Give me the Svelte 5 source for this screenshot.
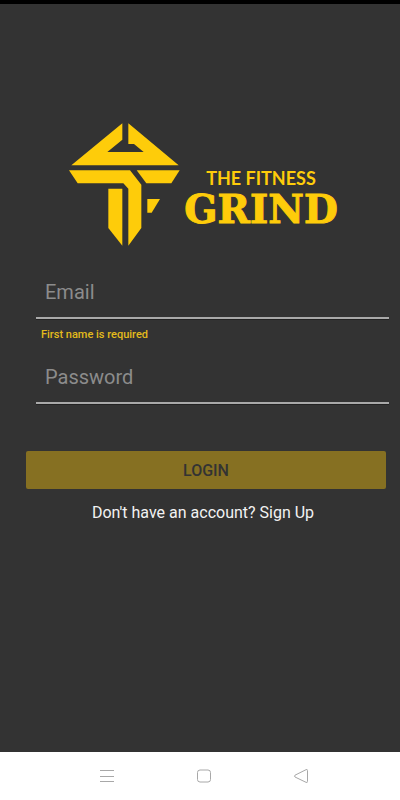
<script>
  let email = '';
  let password = '';
</script>

<div class="screen">
  <div class="status"></div>

  <main>
    <div class="brand">
      <svg class="mark" viewBox="27 24 333 369" aria-hidden="true">
        <!-- roof -->
        <path d="M187 25V74L142 111H251L222 87H205V25L356 151H34Z" />
        <!-- bars and stem -->
        <path d="M27 166H210L244 209V339L205 392V221L190 205H53Z" />
        <path d="M230 166H359L334 205H259Z" />
        <path d="M145 221H187V392L145 339Z" />
        <path d="M262 252H300L275 293H262Z" />
      </svg>
      <div class="name">
        <span class="small">THE FITNESS</span>
        <span class="big">GRIND</span>
      </div>
    </div>

    <form on:submit|preventDefault>
      <div class="field">
        <input type="email" placeholder="Email" aria-label="Email" aria-describedby="email-error" bind:value={email} />
      </div>
      <p class="error" id="email-error">First name is required</p>
      <div class="field">
        <input type="password" placeholder="Password" aria-label="Password" bind:value={password} />
      </div>
      <button class="login" type="submit">LOGIN</button>
    </form>

    <p class="signup">Don't have an account? <a href="#signup">Sign Up</a></p>
  </main>

  <nav>
    <button aria-label="Recent apps">
      <svg viewBox="0 0 16 16"><path d="M1 2.500H15M1 8.500H15M1 13.500H15" /></svg>
    </button>
    <button aria-label="Home">
      <svg viewBox="0 0 16 16"><rect x="1.500" y="2" width="13" height="12" rx="2.500" /></svg>
    </button>
    <button aria-label="Back">
      <svg viewBox="0 0 16 16"><path d="M13 1.700Q14.500 1 14.500 2.500V13.500Q14.500 15 13 14.300L2 9Q1 8 2 7.200Z" /></svg>
    </button>
  </nav>
</div>

<style>
  :global(body) {
    margin: 0;
    background: #333;
  }

  .screen {
    display: flex;
    flex-direction: column;
    min-height: 100vh;
    background: #333;
    color: #f2f2f2;
    font-family: Roboto, sans-serif;
  }

  .status {
    height: 4px;
    background: #000;
  }

  main {
    flex: 1;
    padding-top: 119px;
  }

  .brand {
    display: flex;
    justify-content: center;
    gap: 4px;
    padding-left: 7px;
    color: #fecc0a;
  }

  .mark {
    width: 111px;
    height: 123px;
    fill: #fecc0a;
  }

  .name {
    display: flex;
    flex-direction: column;
    align-items: center;
    padding-top: 45px;
  }

  .small {
    font: bold 18px/20px Lato, sans-serif;
  }

  .big {
    font: bold 39px/42px "DejaVu Serif", serif;
    -webkit-text-stroke: 1px #fecc0a;
  }

  form {
    display: flex;
    flex-direction: column;
    padding: 20px 14px 0 26px;
  }

  .field {
    display: flex;
    margin: 0 -3px 0 10px;
    border-bottom: 2px solid #a9a9a9;
    box-shadow: 0 1px #222;
  }

  input {
    flex: 1;
    min-width: 0;
    height: 51px;
    box-sizing: border-box;
    padding: 0 9px;
    border: 0;
    outline: 0;
    background: none;
    color: #f2f2f2;
    font: 20px Roboto, sans-serif;
  }

  input::placeholder {
    color: #8c8c8c;
    opacity: 1;
  }

  .error {
    margin: 0 15px;
    color: #e3bb1c;
    font-size: 11px;
    font-weight: 500;
    line-height: 32px;
  }

  .login {
    height: 38px;
    margin-top: 47px;
    border: 0;
    border-radius: 2px;
    background: #867022;
    color: #333;
    font: 500 16px Roboto, sans-serif;
  }

  .signup {
    margin: 14px 0 0 6px;
    text-align: center;
    font-size: 16px;
    line-height: 20px;
  }

  a {
    color: inherit;
    text-decoration: none;
  }

  nav {
    display: flex;
    justify-content: center;
    gap: 65px;
    height: 48px;
    padding-left: 7px;
    background: #fff;
  }

  nav button {
    display: flex;
    align-items: center;
    justify-content: center;
    width: 32px;
    padding: 0;
    border: 0;
    background: none;
  }

  nav svg {
    width: 16px;
    height: 16px;
    fill: none;
    stroke: #a8a8a8;
    stroke-width: 1;
  }
</style>
